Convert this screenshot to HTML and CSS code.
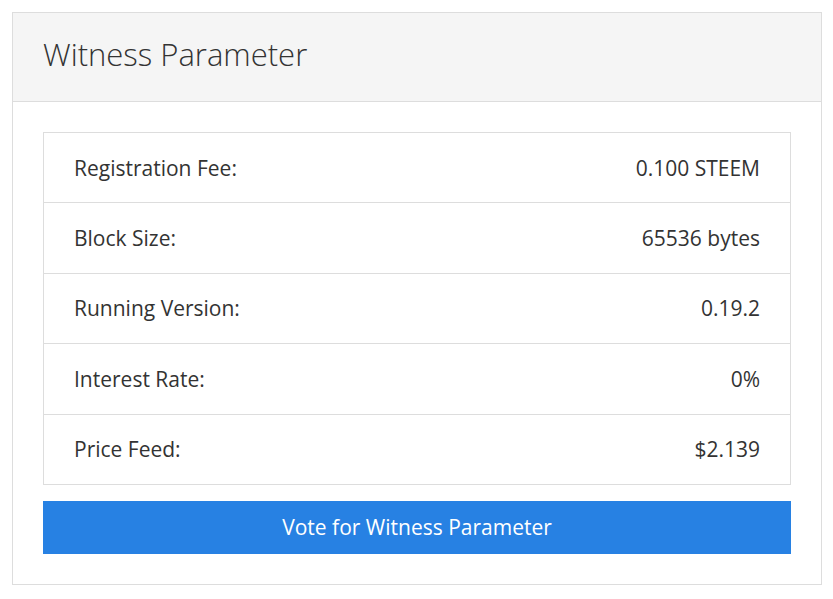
FILE: index.html
```html
<!DOCTYPE html>
<html>
<head>
<meta charset="UTF-8">
<title>Witness Parameter</title>
<link rel="stylesheet" href="styles.css">
</head>
<body>
    <div class="panel">
        <div class="panel-heading">
            <h2>Witness Parameter</h2>
        </div>
        <div class="panel-body">
            <ul class="param-list">
                <li><span>Registration Fee:</span><span>0.100 STEEM</span></li>
                <li><span>Block Size:</span><span>65536 bytes</span></li>
                <li><span>Running Version:</span><span>0.19.2</span></li>
                <li><span>Interest Rate:</span><span>0%</span></li>
                <li><span>Price Feed:</span><span>$2.139</span></li>
            </ul>
            <a class="btn-vote">Vote for Witness Parameter</a>
        </div>
    </div>
</body>
</html>
```

FILE: styles.css
```css
/* Witness panel */
*{
    box-sizing: border-box;
}
body{
    margin: 0;
    padding: 12px 11px 0 12px;
    background: #fff;
    font-family: "Open Sans", "Noto Sans", sans-serif;
    color: #333;
}
.panel{
    border: 1px solid #ddd;
    background: #fff;
}
.panel-heading{
    height: 89px;
    background: #f5f5f5;
    border-bottom: 1px solid #ddd;
    display: flex;
    align-items: center;
    padding: 0 30px 6px;
}
.panel-heading h2{
    margin: 0;
    font-size: 31px;
    font-weight: 300;
    color: #333;
}
.panel-body{
    padding: 30px;
}
.param-list{
    list-style: none;
    margin: 0;
    padding: 0;
    border: 1px solid #ddd;
}
.param-list li{
    display: flex;
    justify-content: space-between;
    align-items: center;
    height: 70.4px;
    padding: 0 30px;
    border-top: 1px solid #ddd;
    font-size: 21px;
}
.param-list li:first-child{
    height: 69.4px;
    border-top: none;
}
.btn-vote{
    display: flex;
    align-items: center;
    justify-content: center;
    margin-top: 16px;
    height: 53px;
    background: #2781e3;
    color: #fff;
    font-size: 21px;
}
```
